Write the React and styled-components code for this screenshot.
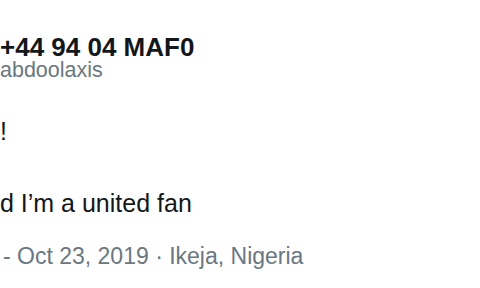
import React from "react"
import styled, { createGlobalStyle } from "styled-components"

const GlobalStyle = createGlobalStyle`
  html, body {
    margin: 0;
    padding: 0;
    background: #ffffff;
  }
  body {
    font-family: "Liberation Sans", Arial, Helvetica, sans-serif;
    overflow: hidden;
  }
`

const Tweet = styled.article`
  width: 480px;
  height: 288px;
  padding-top: 34px;
  box-sizing: border-box;
  overflow: hidden;
  display: flex;
  flex-direction: column;
`

const Header = styled.header`
  display: flex;
  flex-direction: column;
`

const Name = styled.div`
  font-size: 26px;
  line-height: 26px;
  font-weight: 700;
  color: #14171a;
  white-space: nowrap;
`

const Handle = styled.div`
  font-size: 21.5px;
  line-height: 21px;
  color: #6b7780;
  white-space: nowrap;
`

const Body = styled.p`
  margin: 32px 0 0;
  font-size: 25px;
  line-height: 36px;
  color: #14171a;
  white-space: pre-wrap;
`

const Meta = styled.div`
  margin-top: 21px;
  padding-left: ${p => p.indent || 0}px;
  font-size: 23px;
  line-height: 28px;
  color: #6b7780;
  white-space: nowrap;
`

export default function App() {
  return (
    <>
      <GlobalStyle />
      <Tweet>
        <Header>
          <Name>+44 94 04 MAF0</Name>
          <Handle>abdoolaxis</Handle>
        </Header>
        <Body>{"!\n\nd I\u2019m a united fan"}</Body>
        <Meta indent={3}>- Oct 23, 2019 · Ikeja, Nigeria</Meta>
      </Tweet>
    </>
  )
}
